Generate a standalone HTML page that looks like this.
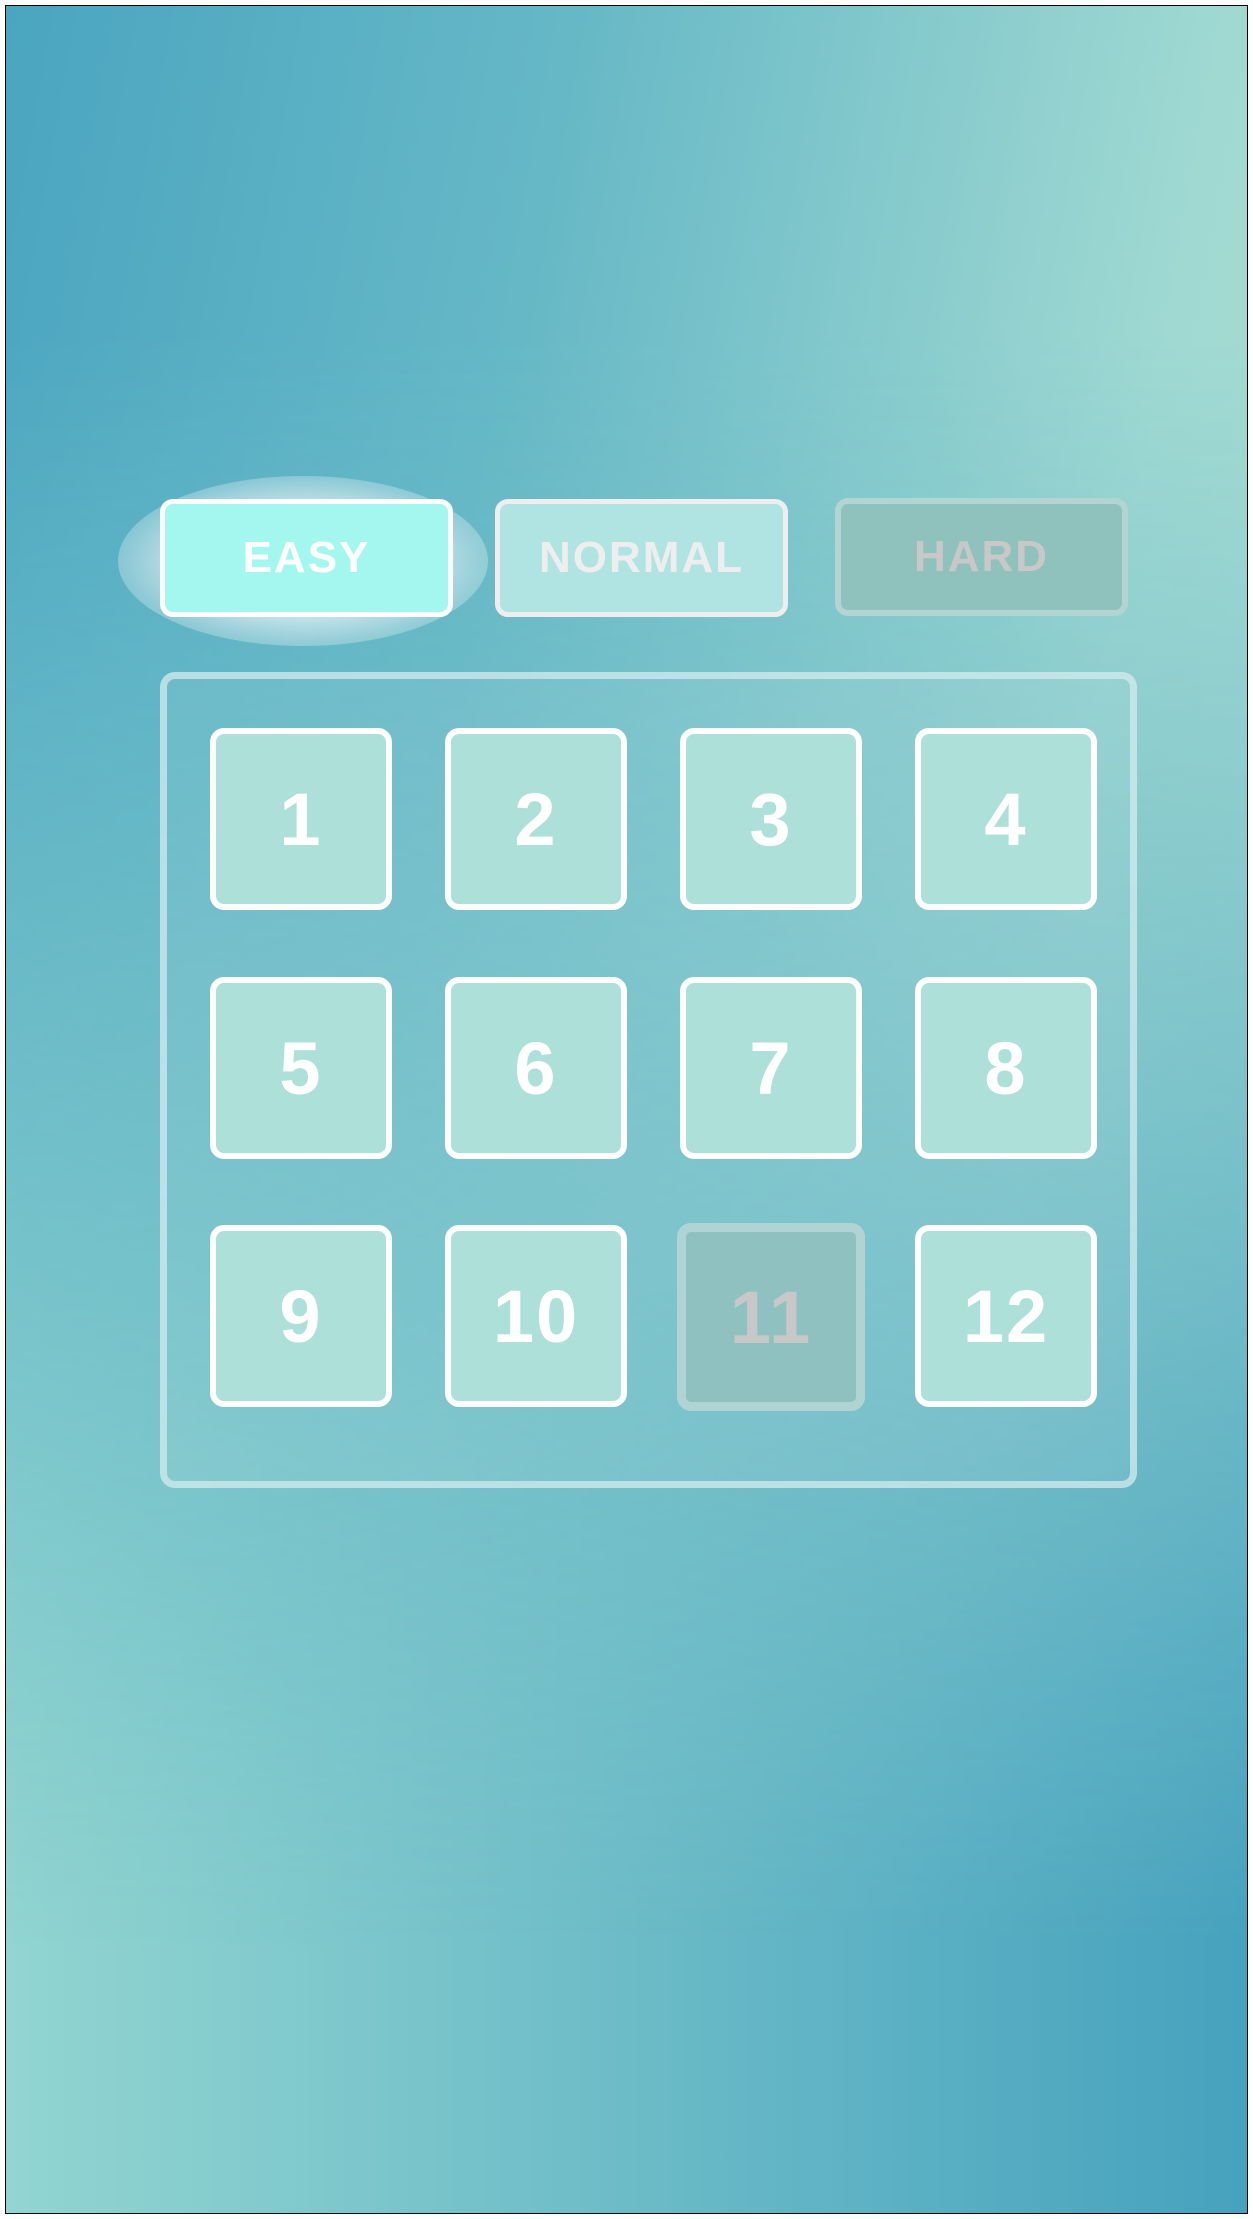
<!DOCTYPE html>
<html><head><meta charset="utf-8"><style>
html,body{margin:0;padding:0;width:1253px;height:2219px;overflow:hidden;background:#fff}
.frame{position:absolute;left:5px;top:5px;width:1241px;height:2207px;border:1px solid #000;overflow:hidden;background:linear-gradient(to right,#92d5d1,#46a2be)}
.top{position:absolute;inset:0;background:linear-gradient(100deg,#4aa5c0 0%,#66b8c6 35%,#a0d9d2 75%,#aee0d4 100%);-webkit-mask-image:linear-gradient(to bottom,#000 0%,#000 15%,rgba(0,0,0,0.55) 50%,transparent 88%);mask-image:linear-gradient(to bottom,#000 0%,#000 15%,rgba(0,0,0,0.55) 50%,transparent 88%)}
.abs{position:absolute;box-sizing:border-box}
.glow{left:112px;top:470px;width:370px;height:170px;border-radius:50%;background:radial-gradient(ellipse at center,rgba(255,255,255,0.7) 40%,rgba(255,255,255,0.3) 68%,rgba(255,255,255,0) 100%)}
.btn{height:118px;width:293px;border-radius:13px;display:flex;align-items:center;justify-content:center;font-family:"Liberation Sans",sans-serif;font-weight:bold;font-size:44px;letter-spacing:2px}
.tile{width:182px;height:182px;border-radius:14px;border:6px solid #fff;background:#aee0da;display:flex;align-items:center;justify-content:center;color:#fff;font-family:"Liberation Sans",sans-serif;font-weight:bold;font-size:74px;letter-spacing:2px}
</style></head><body>
<div class="frame"><div class="top"></div>
<div class="abs glow"></div>
<div class="abs btn" style="left:154px;top:493px;background:#a4f7ef;border:5px solid #fff;color:#fff">EASY</div>
<div class="abs btn" style="left:489px;top:493px;background:#b0e4e3;border:5px solid #eee;color:#eee">NORMAL</div>
<div class="abs btn" style="left:829px;top:492px;background:#8fc1bd;border:6px solid #b2d4d3;color:#c8c8c8">HARD</div>
<div class="abs" style="left:154px;top:666px;width:977px;height:816px;border:7px solid rgba(210,235,238,0.75);border-radius:15px;background:rgba(255,255,255,0.07)"></div>
<div class="abs tile" style="left:204px;top:722px">1</div>
<div class="abs tile" style="left:439px;top:722px">2</div>
<div class="abs tile" style="left:674px;top:722px">3</div>
<div class="abs tile" style="left:909px;top:722px">4</div>
<div class="abs tile" style="left:204px;top:971px">5</div>
<div class="abs tile" style="left:439px;top:971px">6</div>
<div class="abs tile" style="left:674px;top:971px">7</div>
<div class="abs tile" style="left:909px;top:971px">8</div>
<div class="abs tile" style="left:204px;top:1219px">9</div>
<div class="abs tile" style="left:439px;top:1219px">10</div>
<div class="abs tile" style="left:671px;top:1217px;width:188px;height:188px;border:9px solid #b0d4d4;background:#8fc1c1;color:#c8c8c8">11</div>
<div class="abs tile" style="left:909px;top:1219px">12</div>
</div>
</body></html>
